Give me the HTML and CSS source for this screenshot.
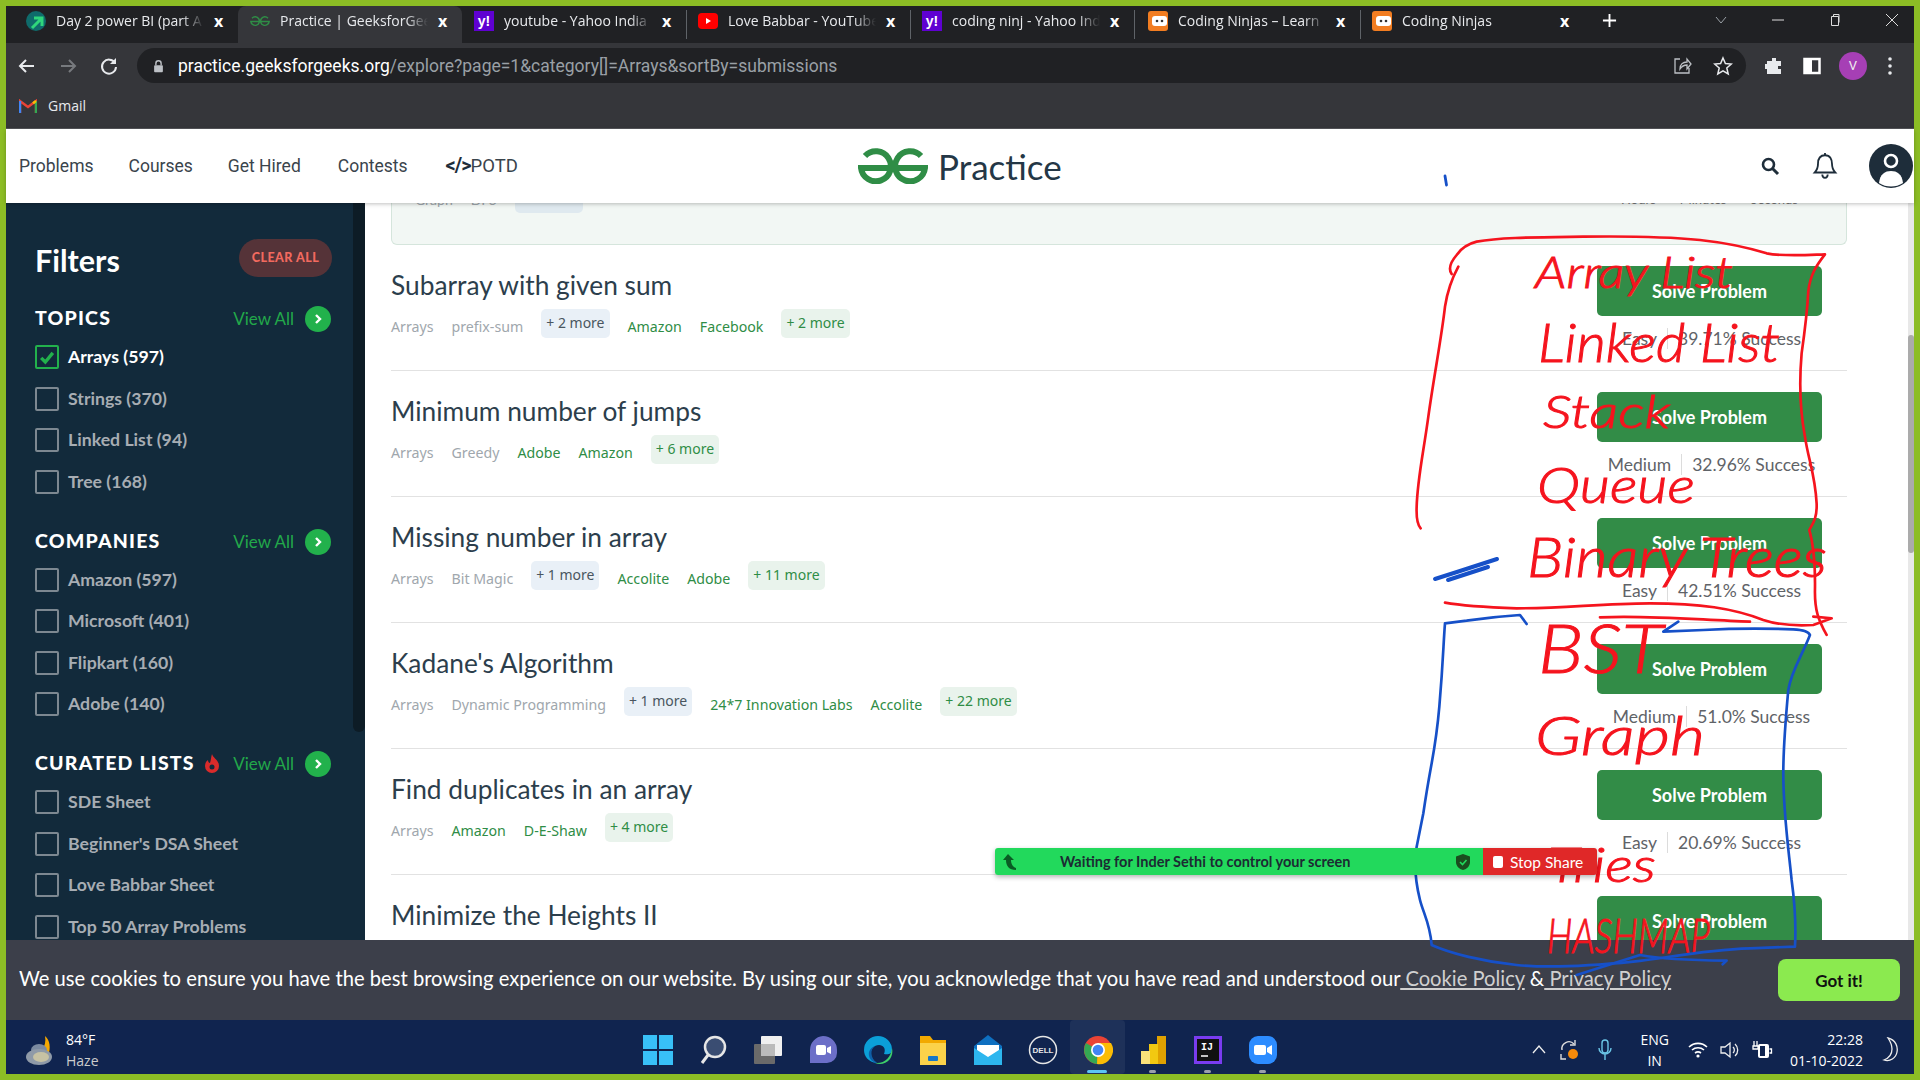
FILE: index.html
```html
<!DOCTYPE html>
<html lang="en">
  <head>
    <meta charset="UTF-8" />
    <title>Practice | GeeksforGeeks</title>
    <link rel="stylesheet" href="styles.css">
  </head>
  <body>
    <svg class="defs" width="0" height="0">
      <symbol id="ninja" viewBox="0 0 20 20">
        <rect width="20" height="20" rx="3" fill="#f27d21"/>
        <rect x="4" y="5" width="15" height="10" rx="3" fill="#fff"/>
        <circle cx="9" cy="10" r="1.3" fill="#333"/>
        <circle cx="14" cy="10" r="1.3" fill="#333"/>
      </symbol>
      <symbol id="arrow-circle" viewBox="0 0 26 26">
        <circle cx="13" cy="13" r="13" fill="#22b14c"/>
        <path d="M11 9l4 4-4 4" fill="none" stroke="#fff" stroke-width="2.4"/>
      </symbol>
    </svg>

    <div id="screen">
      <div id="tab-strip">
        <div class="tab">
          <svg class="fav" viewBox="0 0 20 20"><circle cx="10" cy="10" r="10" fill="#0f6b6b"/><path d="M6 17L15 8M8 7h8v8" fill="none" stroke="#2fd67b" stroke-width="3"/></svg>
          <span class="tab-title">Day 2 power BI (part A</span><span class="tab-close">x</span>
        </div>
        <div class="tab active">
          <svg class="fav" viewBox="0 0 70 36"><path d="M63 8A15 15 0 1 0 67 20H35M7 8A15 15 0 1 1 3 20H35" fill="none" stroke="#2f8d46" stroke-width="5"/></svg>
          <span class="tab-title">Practice | GeeksforGeeks</span><span class="tab-close">x</span>
        </div>
        <div class="tab">
          <span class="yahoo">y!</span>
          <span class="tab-title">youtube - Yahoo India</span><span class="tab-close">x</span>
        </div>
        <div class="tab">
          <svg class="fav" viewBox="0 0 20 20"><rect y="2" width="20" height="16" rx="4" fill="#f00"/><path d="M8 7l5 3-5 3z" fill="#fff"/></svg>
          <span class="tab-title">Love Babbar - YouTube</span><span class="tab-close">x</span>
        </div>
        <div class="tab">
          <span class="yahoo">y!</span>
          <span class="tab-title">coding ninj - Yahoo India</span><span class="tab-close">x</span>
        </div>
        <div class="tab tab-wide">
          <svg class="fav"><use href="#ninja"/></svg>
          <span class="tab-title">Coding Ninjas – Learn</span><span class="tab-close">x</span>
        </div>
        <div class="tab">
          <svg class="fav"><use href="#ninja"/></svg>
          <span class="tab-title">Coding Ninjas</span><span class="tab-close">x</span>
        </div>
        <svg class="new-tab" viewBox="0 0 16 16"><path d="M8 1v14M1 8h14" stroke="#fff" stroke-width="2"/></svg>
        <div class="window-btns">
          <svg viewBox="0 0 14 14"><path d="M2 4l5 6 5-6" fill="none" stroke="#9aa0a6"/></svg>
          <svg viewBox="0 0 14 14"><path d="M1 7h12" stroke="#ddd"/></svg>
          <svg viewBox="0 0 14 14"><path d="M3.500 3.500h7v9h-7zM5.500 3.500v-2h5.500v8" fill="none" stroke="#ddd"/></svg>
          <svg viewBox="0 0 14 14"><path d="M1 1l12 12M13 1L1 13" stroke="#ddd"/></svg>
        </div>
      </div>

      <div id="toolbar">
        <svg class="tool-icon" viewBox="0 0 20 20"><path d="M17 10H4M9 4l-6 6 6 6" fill="none" stroke="#e8eaed" stroke-width="2"/></svg>
        <svg class="tool-icon" viewBox="0 0 20 20"><path d="M3 10h13M11 4l6 6-6 6" fill="none" stroke="#777a7e" stroke-width="2"/></svg>
        <svg class="tool-icon" viewBox="0 0 20 20"><path d="M16 7a7 7 0 1 0 1 4" fill="none" stroke="#e8eaed" stroke-width="2"/><path d="M17 2v6h-6z" fill="#e8eaed"/></svg>
        <div class="url-bar">
          <svg class="lock" viewBox="0 0 12 16"><path d="M3 7V5a3 3 0 0 1 6 0v2" fill="none" stroke="#bdc1c6" stroke-width="1.600"/><rect x="1" y="7" width="10" height="8" rx="1" fill="#bdc1c6"/></svg>
          <span class="url"><b>practice.geeksforgeeks.org</b>/explore?page=1&amp;category[]=Arrays&amp;sortBy=submissions</span>
          <svg class="url-icon" viewBox="0 0 20 20"><path d="M8 3H3v14h14v-5M8 13c0-5 3-7 7-7V3l4 5-4 5V9c-3 0-5 1-7 4z" fill="none" stroke="#bdc1c6" stroke-width="1.300"/></svg>
          <svg class="url-icon" viewBox="0 0 20 20"><path d="M10 2l2.400 5.500 6 .5-4.600 4 1.400 6-5.200-3.200L4.800 18l1.400-6L1.600 8l6-.5z" fill="none" stroke="#e8eaed" stroke-width="1.500"/></svg>
        </div>
        <div class="tool-right">
          <svg class="tool-icon" viewBox="0 0 20 20"><path d="M8 2h4v3h5v5h-3v3h3v5H3v-5H1V8h2V5h5z" fill="#e8eaed"/></svg>
          <svg class="tool-icon" viewBox="0 0 20 20"><rect x="2.500" y="3" width="15" height="14" fill="none" stroke="#fff" stroke-width="2.500"/><rect x="3" y="3" width="7" height="14" fill="#fff"/></svg>
          <span class="avatar">V</span>
          <svg class="tool-icon" viewBox="0 0 20 20"><circle cx="10" cy="3" r="1.800" fill="#e8eaed"/><circle cx="10" cy="10" r="1.800" fill="#e8eaed"/><circle cx="10" cy="17" r="1.800" fill="#e8eaed"/></svg>
        </div>
      </div>

      <div id="bookmarks">
        <svg class="gmail" viewBox="0 0 18 14"><path d="M1 14V2l8 6 8-6v12" fill="none" stroke="#ea4335" stroke-width="2.400"/><path d="M1 14V2" stroke="#4285f4" stroke-width="2.400"/><path d="M17 14V2" stroke="#34a853" stroke-width="2.400"/><path d="M17 2l-3 2.300" stroke="#fbbc04" stroke-width="2.400"/></svg>
        <span>Gmail</span>
      </div>

      <header id="site-header">
        <nav class="site-nav">
          <a>Problems</a>
          <a>Courses</a>
          <a>Get Hired</a>
          <a class="nav-contests">Contests</a>
          <a class="nav-potd"><b class="potd-mark">&lt;/&gt;</b>POTD</a>
        </nav>
        <div class="brand">
          <svg class="brand-logo" viewBox="0 0 70 36"><path d="M63 8A15 15 0 1 0 67 20H35M7 8A15 15 0 1 1 3 20H35" fill="none" stroke="#2f8d46" stroke-width="6"/></svg>
          <span>Practice</span>
        </div>
        <div class="header-icons">
          <svg class="search" viewBox="0 0 20 20"><circle cx="8.500" cy="8.500" r="5.500" fill="none" stroke="#1e2d3a" stroke-width="2.600"/><path d="M12.500 12.500L18 18" stroke="#1e2d3a" stroke-width="3"/></svg>
          <svg class="bell" viewBox="0 0 24 26"><path d="M12 3c-5 0-6.500 4-6.500 8 0 4-1 6-3 8h19c-2-2-3-4-3-8 0-4-1.500-8-6.500-8z" fill="none" stroke="#1e2d3a" stroke-width="1.700"/><path d="M12 1v2M9.500 21a2.500 3 0 0 0 5 0" fill="none" stroke="#1e2d3a" stroke-width="1.700"/></svg>
          <svg class="user" viewBox="0 0 44 44"><circle cx="22" cy="22" r="22" fill="#1e2d3a"/><circle cx="22" cy="17" r="6" fill="none" stroke="#fff" stroke-width="2.600"/><path d="M10 39c1-9 6-12 12-12s11 3 12 12a22 22 0 0 1-24 0z" fill="#fff"/></svg>
        </div>
      </header>

      <div id="page">
        <aside class="sidebar">
          <div class="filters">
            <div class="filters-head">
              <h2>Filters</h2>
              <span class="clear-all">CLEAR ALL</span>
            </div>

            <section class="filter-group">
              <div class="group-head">
                <h3>TOPICS</h3>
                <span class="view-all">View All</span>
                <svg class="view-arrow"><use href="#arrow-circle"/></svg>
              </div>
              <ul class="check-list">
                <li class="checked"><span class="box"><svg viewBox="0 0 24 24"><path d="M5 13l5 5 9-11" fill="none" stroke="#22b14c" stroke-width="4"/></svg></span>Arrays (597)</li>
                <li><span class="box"></span>Strings (370)</li>
                <li><span class="box"></span>Linked List (94)</li>
                <li><span class="box"></span>Tree (168)</li>
              </ul>
            </section>

            <section class="filter-group">
              <div class="group-head">
                <h3>COMPANIES</h3>
                <span class="view-all">View All</span>
                <svg class="view-arrow"><use href="#arrow-circle"/></svg>
              </div>
              <ul class="check-list">
                <li><span class="box"></span>Amazon (597)</li>
                <li><span class="box"></span>Microsoft (401)</li>
                <li><span class="box"></span>Flipkart (160)</li>
                <li><span class="box"></span>Adobe (140)</li>
              </ul>
            </section>

            <section class="filter-group">
              <div class="group-head">
                <h3>CURATED LISTS</h3>
                <svg class="flame" viewBox="0 0 16 20"><path d="M8 0c1 4 7 6 7 12a7 7 0 0 1-14 0c0-3 1.500-5 3-6 0 2 1 3 2 3 1-3 1-6 2-9z" fill="#d92b2b"/><circle cx="8" cy="13" r="2.500" fill="#122a3b"/></svg>
                <span class="view-all">View All</span>
                <svg class="view-arrow"><use href="#arrow-circle"/></svg>
              </div>
              <ul class="check-list">
                <li><span class="box"></span>SDE Sheet</li>
                <li><span class="box"></span>Beginner's DSA Sheet</li>
                <li><span class="box"></span>Love Babbar Sheet</li>
                <li><span class="box"></span>Top 50 Array Problems</li>
              </ul>
            </section>
          </div>
          <div class="sidebar-track"><div class="sidebar-thumb"></div></div>
        </aside>

        <main class="content">
          <div class="problems">
            <div class="potd-card">
              <div class="potd-tags">
                <span>Graph</span><span>DFS</span><span class="potd-pill"></span>
                <span class="potd-time">Hours</span><span class="potd-time">Minutes</span><span class="potd-time">Seconds</span>
              </div>
            </div>

            <article class="problem">
              <div class="problem-info">
                <h4>Subarray with given sum</h4>
                <div class="tags">
                  <span class="tag">Arrays</span><span class="tag">prefix-sum</span><span class="more">+ 2 more</span>
                  <span class="tag company">Amazon</span><span class="tag company">Facebook</span><span class="more company-more">+ 2 more</span>
                </div>
              </div>
              <div class="problem-action">
                <button class="solve">Solve Problem</button>
                <div class="meta"><span>Easy</span><span>39.71% Success</span></div>
              </div>
            </article>

            <article class="problem">
              <div class="problem-info">
                <h4>Minimum number of jumps</h4>
                <div class="tags">
                  <span class="tag">Arrays</span><span class="tag">Greedy</span>
                  <span class="tag company">Adobe</span><span class="tag company">Amazon</span><span class="more company-more">+ 6 more</span>
                </div>
              </div>
              <div class="problem-action">
                <button class="solve">Solve Problem</button>
                <div class="meta"><span>Medium</span><span>32.96% Success</span></div>
              </div>
            </article>

            <article class="problem">
              <div class="problem-info">
                <h4>Missing number in array</h4>
                <div class="tags">
                  <span class="tag">Arrays</span><span class="tag">Bit Magic</span><span class="more">+ 1 more</span>
                  <span class="tag company">Accolite</span><span class="tag company">Adobe</span><span class="more company-more">+ 11 more</span>
                </div>
              </div>
              <div class="problem-action">
                <button class="solve">Solve Problem</button>
                <div class="meta"><span>Easy</span><span>42.51% Success</span></div>
              </div>
            </article>

            <article class="problem">
              <div class="problem-info">
                <h4>Kadane's Algorithm</h4>
                <div class="tags">
                  <span class="tag">Arrays</span><span class="tag">Dynamic Programming</span><span class="more">+ 1 more</span>
                  <span class="tag company">24*7 Innovation Labs</span><span class="tag company">Accolite</span><span class="more company-more">+ 22 more</span>
                </div>
              </div>
              <div class="problem-action">
                <button class="solve">Solve Problem</button>
                <div class="meta"><span>Medium</span><span>51.0% Success</span></div>
              </div>
            </article>

            <article class="problem">
              <div class="problem-info">
                <h4>Find duplicates in an array</h4>
                <div class="tags">
                  <span class="tag">Arrays</span>
                  <span class="tag company">Amazon</span><span class="tag company">D-E-Shaw</span><span class="more company-more">+ 4 more</span>
                </div>
              </div>
              <div class="problem-action">
                <button class="solve">Solve Problem</button>
                <div class="meta"><span>Easy</span><span>20.69% Success</span></div>
              </div>
            </article>

            <article class="problem">
              <div class="problem-info">
                <h4>Minimize the Heights II</h4>
              </div>
              <div class="problem-action">
                <button class="solve">Solve Problem</button>
              </div>
            </article>
          </div>
          <div class="page-track"><div class="page-thumb"></div></div>
        </main>
      </div>

      <div id="cookie-bar">
        <p>We use cookies to ensure you have the best browsing experience on our website. By using our site, you acknowledge that you have read and understood our<a> Cookie Policy</a> &amp;<a> Privacy Policy</a></p>
        <button class="got-it">Got it!</button>
      </div>

      <footer id="taskbar">
        <div class="weather">
          <svg class="weather-icon" viewBox="0 0 30 32"><path d="M20 2c5 4 6 12 3 20l-6-6c3-4 4-9 3-14z" fill="#f5a800"/><ellipse cx="14" cy="16" rx="8" ry="6" fill="#7b8aa0"/><ellipse cx="14" cy="23" rx="13" ry="8" fill="#8f9aa8"/><ellipse cx="16" cy="23" rx="8" ry="5" fill="#c7c2a4"/></svg>
          <div class="weather-text"><span>84°F</span><span class="dim">Haze</span></div>
        </div>
        <div class="task-icons">
          <span class="task"><svg viewBox="0 0 30 30"><path d="M0 0h14v14H0zM16 0h14v14H16zM0 16h14v14H0zM16 16h14v14H16z" fill="#38c0f7"/></svg></span>
          <span class="task"><svg viewBox="0 0 30 30"><circle cx="17" cy="12" r="10" fill="#3a4d72" stroke="#e6e6e6" stroke-width="2.500"/><path d="M10 20l-6 8" stroke="#e6e6e6" stroke-width="3"/></svg></span>
          <span class="task"><svg viewBox="0 0 30 30"><rect x="8" y="1" width="21" height="20" rx="1" fill="#f0f0f0"/><rect x="1" y="9" width="21" height="20" rx="1" fill="#6a6a6a"/><rect x="8" y="9" width="14" height="12" fill="#bbb"/></svg></span>
          <span class="task"><svg viewBox="0 0 30 30"><path d="M15 1a14 14 0 0 1 14 14v3a10 10 0 0 1-10 10H2v-13A14 14 0 0 1 15 1z" fill="#6c6fc8"/><rect x="8" y="10" width="10" height="10" rx="2" fill="#fff"/><path d="M19 13l4-2v8l-4-2z" fill="#fff"/></svg></span>
          <span class="task"><svg viewBox="0 0 30 30"><path d="M15 1a14 14 0 0 1 14 14c0 4-4 5-8 4 3-7-3-11-9-8-6 3-6 12 2 17C5 27 1 21 1 15A14 14 0 0 1 15 1z" fill="#0b9fd8"/><path d="M29 13c-1 9-7 16-17 15 5 2 11 1 15-4 2-3 3-7 2-11z" fill="#3ecf6a"/><path d="M12 11c-5 3-5 12 2 17-6-1-9-6-8-11 1-3 3-5 6-6z" fill="#0e5fa8"/></svg></span>
          <span class="task"><svg viewBox="0 0 30 30"><path d="M2 1h10l3 4h13v25H2z" fill="#f2a900"/><rect x="2" y="8" width="26" height="22" fill="#fbd24a"/><rect x="10" y="21" width="10" height="5" rx="1" fill="#1577c9"/></svg></span>
          <span class="task"><svg viewBox="0 0 30 30"><path d="M15 0l14 11v19H1V11z" fill="#0e6fc0"/><path d="M4 10h22v9l-11 6-11-6z" fill="#fff"/><path d="M1 13l14 9 14-9v17H1z" fill="#2db6ee"/></svg></span>
          <span class="task"><svg viewBox="0 0 30 30"><circle cx="15" cy="15" r="13.500" fill="none" stroke="#e6e6e6" stroke-width="1.500"/><text class="dell" x="15" y="18">DELL</text></svg></span>
          <span class="task current"><svg viewBox="0 0 30 30"><circle cx="15" cy="15" r="14" fill="#ea4335"/><path d="M15 15L3 8A14 14 0 0 0 14 29z" fill="#34a853"/><path d="M15 8h13a14 14 0 0 1-14 21z" fill="#fbbc04"/><circle cx="15" cy="15" r="7" fill="#fff"/><circle cx="15" cy="15" r="5.300" fill="#4285f4"/></svg></span>
          <span class="task open"><svg viewBox="0 0 30 30"><rect x="19" y="1" width="9" height="28" fill="#e0a100"/><rect x="11" y="9" width="9" height="20" fill="#f2c811"/><rect x="3" y="16" width="9" height="13" fill="#fbe27a"/></svg></span>
          <span class="task open"><svg viewBox="0 0 30 30"><rect x="1" y="1" width="28" height="28" fill="#7a3cf0"/><rect x="4" y="4" width="22" height="22" fill="#111"/><text class="ij" x="8" y="15">IJ</text><path d="M8 21h7" stroke="#fff" stroke-width="1.500"/></svg></span>
          <span class="task open"><svg viewBox="0 0 30 30"><rect x="1" y="1" width="28" height="28" rx="9" fill="#2d8cff"/><rect x="6" y="10" width="12" height="10" rx="2" fill="#fff"/><path d="M19 13l5-3v10l-5-3z" fill="#fff"/></svg></span>
        </div>
        <div class="tray">
          <svg class="tray-icon" viewBox="0 0 16 16"><path d="M2 11l6-7 6 7" fill="none" stroke="#eee" stroke-width="1.300"/></svg>
          <svg class="tray-icon wide" viewBox="0 0 22 22"><path d="M16 5a7 7 0 0 0-12 6M4 17" fill="none" stroke="#ddd" stroke-width="1.400"/><path d="M17 1v5h-5" fill="none" stroke="#ddd" stroke-width="1.400"/><path d="M3 15v5h5" fill="none" stroke="#ddd" stroke-width="1.400"/><circle cx="15" cy="15" r="5" fill="#f58a0b"/></svg>
          <svg class="tray-icon wide" viewBox="0 0 22 22"><rect x="8" y="1" width="6" height="13" rx="3" fill="none" stroke="#6cc7e8" stroke-width="1.400"/><path d="M5 9a6 6 0 0 0 12 0M11 15v6" fill="none" stroke="#6cc7e8" stroke-width="1.400"/></svg>
          <div class="lang"><span>ENG</span><span>IN</span></div>
          <svg class="tray-icon wide" viewBox="0 0 22 22"><path d="M2 8a13 13 0 0 1 18 0M5 11a9 9 0 0 1 12 0M8 14a5 5 0 0 1 6 0" fill="none" stroke="#fff" stroke-width="1.600"/><circle cx="11" cy="17" r="1.600" fill="#fff"/></svg>
          <svg class="tray-icon wide" viewBox="0 0 22 22"><path d="M2 8h4l5-4v14l-5-4H2z" fill="none" stroke="#eee" stroke-width="1.300"/><path d="M14 8a4 4 0 0 1 0 6M16 5a8 8 0 0 1 0 12" fill="none" stroke="#eee" stroke-width="1.300"/></svg>
          <svg class="tray-icon wide" viewBox="0 0 22 22"><rect x="7" y="5" width="11" height="14" rx="2" fill="#fff"/><path d="M3 2v5M6 2v5M2 7h5v3H2zM18.500 10h2v4h-2" stroke="#fff" fill="none" stroke-width="1.300"/><rect x="9" y="7" width="5" height="10" fill="#10244f"/></svg>
          <div class="clock"><span>22:28</span><span>01-10-2022</span></div>
          <svg class="tray-icon moon" viewBox="0 0 18 26"><path d="M6 1c8 2 10 9 9 14-1 6-7 10-13 8 5-2 8-6 8-11 0-4-2-8-4-11z" fill="none" stroke="#eee" stroke-width="1.300"/></svg>
        </div>
      </footer>

      <svg id="ink" viewBox="0 0 1920 1080">
        <g class="ink-red" transform="translate(1400 220) scale(.3333)">
          <path d="M62 925Q48 910 50 860C52 780 70 700 85 590S125 350 135 260Q145 195 175 140M155 162Q140 140 170 105Q190 75 230 65C300 52 400 52 550 50S800 50 900 60Q1010 72 1100 100C1150 110 1220 105 1275 103C1250 135 1230 165 1225 215C1222 270 1215 330 1205 400C1198 480 1200 570 1215 650C1225 720 1245 760 1250 850C1252 900 1235 915 1228 930C1245 990 1246 1050 1245 1110C1244 1170 1255 1200 1280 1245"/>
          <path d="M135 1148Q200 1160 350 1165C500 1165 600 1150 750 1150C900 1150 1000 1165 1090 1200Q1150 1220 1240 1215L1295 1195L1240 1190M600 1192C750 1185 900 1200 1050 1205"/>
        </g>
        <g class="ink-words">
          <text x="1535" y="288" textLength="198" lengthAdjust="spacingAndGlyphs" font-size="44">Array List</text>
          <text x="1538" y="362" textLength="242" lengthAdjust="spacingAndGlyphs" font-size="54">Linked List</text>
          <text x="1543" y="428" textLength="127" lengthAdjust="spacingAndGlyphs" font-size="46">Stack</text>
          <text x="1537" y="503" textLength="158" lengthAdjust="spacingAndGlyphs" font-size="50">Queue</text>
          <text x="1527" y="577" textLength="300" lengthAdjust="spacingAndGlyphs" font-size="56">Binary Trees</text>
          <text x="1538" y="673" textLength="125" lengthAdjust="spacingAndGlyphs" font-size="68">BST</text>
          <text x="1535" y="755" textLength="170" lengthAdjust="spacingAndGlyphs" font-size="54">Graph</text>
          <text x="1548" y="882" textLength="108" lengthAdjust="spacingAndGlyphs" font-size="48">Tries</text>
          <text x="1547" y="953" textLength="163" lengthAdjust="spacingAndGlyphs" font-size="48">HASHMAP</text>
        </g>
        <g class="ink-blue">
          <path d="M1445 176l1.500 9"/>
          <path class="thick" d="M1435 579L1460 571L1497 559M1448 580L1488 567"/>
          <g transform="translate(1400 600) scale(.3333)">
            <path d="M380 72L360 45Q280 50 200 62L135 70C130 130 130 180 118 320S95 470 70 640L50 740C40 800 50 860 60 900S90 970 95 1035C150 1060 250 1085 350 1095S600 1095 700 1085S900 1050 1050 1045L1185 1040Q1190 950 1175 840C1165 740 1150 640 1150 520C1150 440 1155 380 1165 270C1175 210 1205 170 1230 105Q1225 90 1180 88C1100 85 1000 85 910 90L790 95L835 65"/>
            <path d="M530 1125L720 1065Q800 1080 980 1082L968 1093"/>
          </g>
        </g>
      </svg>

      <div class="share-bar">
        <div class="share-status">
          <svg class="share-arrow" viewBox="0 0 14 16"><path d="M5 0l6 6H8c0 4 2 7 5 8v2C6 16 3 12 3 6H0z" fill="#0a5c24"/></svg>
          <span>Waiting for Inder Sethi to control your screen</span>
          <svg class="share-shield" viewBox="0 0 14 16"><path d="M7 0l7 2.500V8c0 4-3 7-7 8-4-1-7-4-7-8V2.500z" fill="#1b4d1f"/><path d="M4 8l2.500 2.500L10.500 6" fill="none" stroke="#22d95c" stroke-width="1.600"/></svg>
        </div>
        <div class="share-stop"><i></i>Stop Share</div>
      </div>
    </div>
  </body>
</html>
```

FILE: styles.css
```css
* {
  box-sizing: border-box;
}
body {
  margin: 0;
  font-family: "Lato", "Noto Sans", sans-serif;
  background-color: #8cbd25;
  overflow: hidden;
}
.defs {
  position: absolute;
}
#screen {
  position: relative;
  width: 1920px;
  height: 1080px;
  padding: 6px 6px 6px 6px;
  background-color: #8cbd25;
  display: flex;
  flex-direction: column;
  overflow: hidden;
}

/* browser chrome */
#tab-strip {
  display: flex;
  align-items: stretch;
  height: 37px;
  padding-left: 8px;
  background-color: #202124;
  color: #e8eaed;
  font-family: "Open Sans", sans-serif;
  font-size: 14px;
  flex: none;
}
.tab {
  width: 224px;
  padding: 0 12px 8px;
  display: flex;
  align-items: center;
  gap: 10px;
  position: relative;
}
.tab-wide {
  width: 226px;
  padding-left: 14px;
}
.tab + .tab::before {
  content: "";
  position: absolute;
  left: 0;
  top: 4px;
  bottom: 4px;
  width: 1px;
  background-color: #5f6368;
}
.tab.active {
  background-color: #35363a;
  border-radius: 8px 8px 0 0;
}
.tab.active::before,
.tab.active + .tab::before {
  display: none;
}
.fav {
  width: 20px;
  height: 20px;
  flex: none;
}
.yahoo {
  width: 20px;
  height: 20px;
  flex: none;
  background-color: #5f01d1;
  color: #fff;
  font: bold 14px/20px "Liberation Sans", sans-serif;
  text-align: center;
}
.tab-title {
  flex: 1;
  white-space: nowrap;
  overflow: hidden;
  -webkit-mask-image: linear-gradient(to right, #000 85%, transparent);
  mask-image: linear-gradient(to right, #000 85%, transparent);
}
.tab-close {
  font-size: 16px;
  font-weight: bold;
  color: #fff;
  width: 12px;
}
.new-tab {
  width: 15px;
  height: 15px;
  margin: 7px 0 0 18px;
}
.window-btns {
  margin-left: 97px;
  padding-bottom: 10px;
  display: flex;
  align-items: center;
  gap: 43px;
}
.window-btns svg {
  width: 14px;
  height: 14px;
}
#toolbar {
  display: flex;
  align-items: center;
  height: 45px;
  padding-left: 11px;
  background-color: #35363a;
  flex: none;
}
.tool-icon {
  width: 20px;
  height: 20px;
  margin-right: 21px;
  flex: none;
}
#toolbar > .tool-icon:nth-child(3) {
  margin-right: 20px;
}
.url-bar {
  width: 1609px;
  height: 35px;
  margin-left: -2px;
  border-radius: 18px;
  background-color: #202124;
  display: flex;
  align-items: center;
  padding-left: 16px;
  color: #9aa0a6;
  font-family: "Roboto", sans-serif;
  font-size: 17.500px;
}
.lock {
  width: 11px;
  height: 14px;
  margin-right: 14px;
}
.url {
  flex: 1;
}
.url b {
  font-weight: normal;
  color: #fff;
}
.url-icon {
  width: 20px;
  height: 20px;
  margin-right: 21px;
}
.url-icon:last-child {
  margin-right: 13px;
}
.tool-right {
  display: flex;
  align-items: center;
  margin-left: 18px;
}
.tool-right .tool-icon {
  margin-right: 18px;
}
.tool-right .tool-icon:last-child {
  margin: 0 0 0 13px;
}
.avatar {
  width: 28px;
  height: 28px;
  margin-left: -1px;
  border-radius: 50%;
  background-color: #a63fb5;
  color: #eee;
  font: 13px/28px "Roboto", sans-serif;
  text-align: center;
}
#bookmarks {
  display: flex;
  align-items: center;
  height: 41px;
  padding: 0 0 5px 13px;
  background-color: #35363a;
  border-bottom: 1px solid #55575b;
  color: #e8eaed;
  font-family: "Open Sans", sans-serif;
  font-size: 14px;
  gap: 11px;
  flex: none;
}
.gmail {
  width: 18px;
  height: 14px;
}

/* site header */
#site-header {
  display: flex;
  align-items: center;
  height: 74px;
  flex: none;
  background-color: #fff;
  position: relative;
  z-index: 2;
  box-shadow: 0 1px 4px rgba(0, 0, 0, 0.25);
}
.site-nav {
  width: 852px;
  padding: 0 0 2px 13px;
  display: flex;
  align-items: baseline;
  gap: 35px;
  color: #3a444c;
  font-family: "Roboto", sans-serif;
  font-size: 17.500px;
}
.nav-contests {
  margin-left: 2px;
}
.nav-potd {
  margin-left: 3px;
  font-size: 18.500px;
}
.potd-mark {
  color: #1e2d3a;
  font-size: 20px;
  font-weight: bold;
  letter-spacing: -1px;
}
.brand {
  display: flex;
  align-items: center;
  gap: 10px;
  color: #243746;
  font-size: 35px;
}
.brand-logo {
  width: 70px;
  height: 36px;
}
.header-icons {
  margin-left: auto;
  margin-right: 1px;
  display: flex;
  align-items: center;
}
.search {
  width: 20px;
  height: 20px;
}
.bell {
  width: 26px;
  height: 28px;
  margin: 0 31px 0 32px;
}
.user {
  width: 44px;
  height: 44px;
}

/* sidebar */
#page {
  flex: 1;
  min-height: 0;
  display: flex;
  background-color: #fff;
}
.sidebar {
  width: 359px;
  flex: none;
  display: flex;
  background-color: #122a3b;
  overflow: hidden;
}
.filters {
  width: 347px;
  padding: 36px 21px 0 29px;
  flex: none;
}
.filters-head {
  display: flex;
  align-items: center;
  justify-content: space-between;
  height: 38px;
  margin: 0 0 29px;
}
.filters-head h2 {
  margin: 4px 0 0;
  color: #fff;
  font-size: 30.500px;
  font-weight: 700;
}
.clear-all {
  width: 93px;
  height: 38px;
  border-radius: 19px;
  background-color: #553338;
  color: #f26a5f;
  font-size: 12.500px;
  font-weight: 900;
  letter-spacing: 0.5px;
  line-height: 38px;
  text-align: center;
}
.filter-group + .filter-group {
  margin-top: 35px;
}
.group-head {
  display: flex;
  align-items: center;
  height: 26px;
  margin-bottom: 13px;
}
.group-head h3 {
  margin: 0;
  padding-bottom: 3px;
  color: #fff;
  font-size: 19.500px;
  font-weight: 900;
  letter-spacing: 1.2px;
}
.view-all {
  margin-left: auto;
  padding-bottom: 1px;
  color: #22a84a;
  font-size: 17px;
}
.view-arrow {
  width: 26px;
  height: 26px;
  margin-left: 11px;
  margin-right: 1px;
}
.flame {
  width: 16px;
  height: 20px;
  margin-left: 9px;
}
.check-list {
  list-style: none;
  margin: 0;
  padding: 0;
  display: flex;
  flex-direction: column;
  gap: 17.500px;
}
.check-list li {
  display: flex;
  align-items: center;
  height: 24px;
  gap: 9px;
  color: #a7adb3;
  font-size: 17.700px;
  font-weight: 700;
  line-height: 22px;
}
.check-list li.checked {
  color: #fff;
}
.box {
  width: 24px;
  height: 24px;
  flex: none;
  border: 2px solid #7d8891;
  border-radius: 2px;
}
.box svg {
  display: block;
  width: 20px;
  height: 20px;
}
.checked .box {
  border-color: #22b14c;
}
.sidebar-track {
  width: 12px;
  flex: none;
}
.sidebar-thumb {
  height: 529px;
  background-color: #0d1c26;
  border-radius: 0 0 6px 6px;
}

/* problem list */
.content {
  flex: 1;
  min-width: 0;
  display: flex;
  overflow: hidden;
}
.problems {
  flex: 1;
  padding: 0 61px 0 26px;
  min-width: 0;
}
.potd-card {
  display: flow-root;
  height: 42px;
  background-color: #f2f7f4;
  border: 1px solid #d5e5dc;
  border-top: none;
  border-radius: 0 0 6px 6px;
}
.potd-tags {
  display: flex;
  align-items: center;
  height: 18px;
  margin-top: -13px;
  padding-left: 23px;
  gap: 18px;
  color: #a0a7ad;
  font-size: 14px;
}
.potd-pill {
  width: 68px;
  height: 29px;
  margin-top: -2px;
  background-color: #dfe9ef;
  border-radius: 5px;
}
.potd-time {
  margin-left: 6px;
  font-size: 13px;
  color: #777;
}
.potd-pill + .potd-time {
  margin-left: auto;
}
.potd-time:last-child {
  margin-right: 48px;
}
.problem {
  display: flex;
  height: 126px;
  padding: 21px 25px 0 0;
  border-bottom: 1px solid #e2e2e2;
}
.problem-info {
  flex: 1;
  padding-top: 4px;
}
.problem-info h4 {
  margin: 0 0 9px;
  height: 30px;
  color: #2c3e4c;
  font-size: 26.300px;
  font-weight: 400;
  line-height: 30px;
}
.tags {
  display: flex;
  align-items: center;
  height: 29px;
  gap: 18px;
  font-family: "Noto Sans", sans-serif;
  font-size: 14.200px;
}
.tag {
  color: #a0a7ad;
  padding-top: 5px;
}
.tag.company {
  color: #2f8d46;
}
.more {
  height: 29px;
  padding: 0 5px;
  line-height: 27px;
  border-radius: 5px;
  background-color: #e9f0f7;
  color: #4a5660;
  font-size: 14px;
}
.company-more {
  background-color: #e9f3ec;
  color: #2f8d46;
}
.problem-action {
  width: 225px;
  flex: none;
}
.solve {
  display: block;
  width: 100%;
  height: 50px;
  border: none;
  border-radius: 5px;
  background-color: #328c47;
  color: #fff;
  font: 700 18px "Lato", sans-serif;
}
.meta {
  display: flex;
  justify-content: center;
  align-items: center;
  height: 26px;
  margin-top: 9px;
  padding-left: 4px;
  color: #5f6368;
  font-size: 17.500px;
}
.meta span + span {
  margin-left: 10px;
  padding-left: 10px;
  border-left: 1px solid #dcdcdc;
}
.page-track {
  width: 6px;
  flex: none;
  background-color: #e8e8e8;
  padding-top: 132px;
}
.page-thumb {
  height: 218px;
  background-color: #ababab;
  border-radius: 3px;
}

/* cookie bar */
#cookie-bar {
  display: flex;
  align-items: center;
  height: 80px;
  flex: none;
  padding: 0 14px 0 13px;
  background-color: #3c3f4a;
  color: #fff;
  position: relative;
  z-index: 2;
}
#cookie-bar p {
  flex: 1;
  margin: 0 0 4px;
  font-size: 20.200px;
  white-space: nowrap;
}
#cookie-bar a {
  color: #d0d0d0;
  text-decoration: underline;
}
.got-it {
  width: 122px;
  height: 42px;
  border: none;
  border-radius: 8px;
  background-color: #8bea4f;
  color: #111;
  font: 700 17px "Lato", sans-serif;
}

/* windows taskbar */
#taskbar {
  display: grid;
  grid-template-columns: 1fr auto 1fr;
  align-items: center;
  height: 54px;
  flex: none;
  background-color: #10244f;
  color: #fff;
  font-family: "Open Sans", sans-serif;
  font-size: 14px;
  position: relative;
  z-index: 2;
}
.weather {
  display: flex;
  align-items: center;
  padding: 5px 0 0 19px;
  gap: 11px;
}
.weather-icon {
  width: 30px;
  height: 32px;
}
.weather-text,
.lang,
.clock {
  display: flex;
  flex-direction: column;
  line-height: 21px;
}
.dim {
  color: #ccc;
}
.task-icons {
  display: flex;
}
.task {
  width: 55px;
  height: 54px;
  padding-top: 5px;
  display: flex;
  align-items: center;
  justify-content: center;
  position: relative;
}
.task svg {
  width: 30px;
  height: 30px;
}
.task.open::after,
.task.current::after {
  content: "";
  position: absolute;
  bottom: 1px;
  left: 24px;
  width: 7px;
  height: 3px;
  border-radius: 2px;
  background-color: #9aa0ac;
}
.task.current {
  background-color: #1e3159;
  border-radius: 4px;
}
.task.current::after {
  left: 17px;
  width: 20px;
  background-color: #5cc5f5;
}
.dell {
  fill: #e6e6e6;
  font: bold 8px "Liberation Sans", sans-serif;
  text-anchor: middle;
}
.ij {
  fill: #fff;
  font: bold 10px "Liberation Mono", monospace;
}
.tray {
  display: flex;
  align-items: center;
  justify-content: flex-end;
  padding: 5px 14px 0 0;
}
.tray-icon {
  width: 16px;
  height: 16px;
  margin-right: 11px;
}
.tray-icon.wide {
  width: 22px;
  height: 22px;
  margin-right: 12px;
}
.tray-icon.wide:nth-child(2) {
  margin-right: 14px;
}
.tray-icon.wide:nth-child(5) {
  margin-right: 10px;
}
.tray-icon.wide:nth-child(6) {
  margin-right: 10px;
}
.lang {
  align-items: center;
  margin: 0 18px 0 12px;
}
.clock {
  align-items: flex-end;
  margin-left: 5px;
}
.tray-icon.moon {
  width: 18px;
  height: 26px;
  margin: 0 0 0 19px;
}

/* pen annotations */
#ink {
  position: absolute;
  left: 0;
  top: 0;
  width: 1920px;
  height: 1080px;
  z-index: 3;
  pointer-events: none;
}
.ink-red path,
.ink-blue path {
  fill: none;
  stroke-linecap: round;
  stroke-linejoin: round;
}
.ink-red path {
  stroke: #f5141e;
  stroke-width: 8;
}
.ink-blue path {
  stroke: #1650c8;
  stroke-width: 2.800;
}
.ink-blue g path {
  stroke-width: 8;
}
.ink-blue path.thick {
  stroke-width: 4;
}
.ink-words text {
  fill: #f5141e;
  font-family: "Lato", sans-serif;
  font-style: italic;
  font-weight: 300;
  stroke: #f5141e;
  stroke-width: 1;
}

/* zoom share bar */
.share-bar {
  position: absolute;
  left: 995px;
  top: 848px;
  width: 602px;
  height: 27px;
  display: flex;
  z-index: 4;
  box-shadow: 0 2px 5px rgba(0, 0, 0, 0.3);
  border-radius: 3px;
  overflow: hidden;
}
.share-status {
  width: 488px;
  display: flex;
  align-items: center;
  padding: 0 13px 0 8px;
  background-color: #22d95c;
  color: #1c2b33;
  font: 700 14.500px "Lato", sans-serif;
}
.share-arrow {
  width: 14px;
  height: 16px;
}
.share-status span {
  margin-left: 43px;
}
.share-shield {
  width: 14px;
  height: 16px;
  margin-left: auto;
}
.share-stop {
  flex: 1;
  display: flex;
  align-items: center;
  padding-left: 10px;
  gap: 7px;
  background-color: #e02828;
  color: #fff;
  font: 15.500px "Lato", sans-serif;
}
.share-stop i {
  width: 10px;
  height: 12px;
  background-color: #fff;
  border-radius: 2px;
}
```
